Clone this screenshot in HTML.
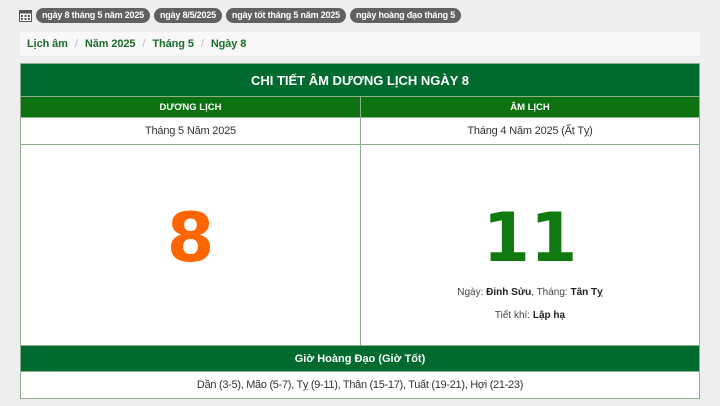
<!DOCTYPE html>
<html><head><meta charset="utf-8"><style>
*{box-sizing:border-box;margin:0;padding:0}
body{width:720px;height:406px;background:#eeeeee;font-family:"Liberation Sans",sans-serif;position:relative;overflow:hidden}
.tags{position:absolute;top:8px;left:19px;display:flex;gap:4px;align-items:center}
.tag{background:#616161;color:#fff;font-size:9px;letter-spacing:-0.2px;font-weight:bold;border-radius:8px;height:15px;line-height:15px;padding:0 6px}
.bc{position:absolute;top:32px;left:20px;width:680px;height:24px;background:#f8f8f8;font-size:11px;letter-spacing:-0.1px;font-weight:bold;color:#1c6e2a;line-height:24px;padding-left:7px}
.bc span{color:#bbb;font-weight:normal;margin:0 7px}
table{position:absolute;top:63px;left:20px;width:680px;border-collapse:collapse;background:#fff;border:1px solid #8fb08f}
td{border:1px solid #8fb08f;text-align:center;padding:0}
.t{background:#006a2f;color:#fff;font-weight:bold;font-size:13px;height:33px}
.s{background:#0c710f;color:#fff;font-weight:bold;font-size:9.5px;height:21px}
.r{font-size:11px;letter-spacing:-0.2px;color:#333;height:27px}
.big{height:201px;vertical-align:top}
.g{background:#006a2f;color:#fff;font-weight:bold;font-size:11px;height:26px}
.l{font-size:11px;letter-spacing:-0.3px;color:#333;height:27px}
.num{font-family:"DejaVu Sans",sans-serif;font-size:68px;font-weight:bold;margin-top:54px;line-height:80px;letter-spacing:0}
</style></head><body>
<div class="tags">
<svg width="13" height="13" viewBox="0 0 13 13"><rect x="0.5" y="1.5" width="12" height="11" fill="#fff" stroke="#555"/><rect x="0.5" y="1.5" width="12" height="3" fill="#555"/><g fill="#555"><rect x="2" y="6" width="2" height="2"/><rect x="5.5" y="6" width="2" height="2"/><rect x="9" y="6" width="2" height="2"/><rect x="2" y="9" width="2" height="2"/><rect x="5.5" y="9" width="2" height="2"/><rect x="9" y="9" width="2" height="2"/></g></svg>
<div class="tag">ngày 8 tháng 5 năm 2025</div><div class="tag">ngày 8/5/2025</div><div class="tag">ngày tốt tháng 5 năm 2025</div><div class="tag">ngày hoàng đạo tháng 5</div></div>
<div class="bc">Lịch âm<span>/</span>Năm 2025<span>/</span>Tháng 5<span>/</span>Ngày 8</div>
<table>
<tr><td colspan="2" class="t">CHI TIẾT ÂM DƯƠNG LỊCH NGÀY 8</td></tr>
<tr><td class="s" style="width:340px">DƯƠNG LỊCH</td><td class="s">ÂM LỊCH</td></tr>
<tr><td class="r">Tháng 5 Năm 2025</td><td class="r">Tháng 4 Năm 2025 (Ất Tỵ)</td></tr>
<tr><td class="big"><div class="num" style="color:#ff6600">8</div></td>
<td class="big"><div class="num" style="color:#107a10">11</div>
<div style="font-size:10px;color:#444;margin-top:8px">Ngày: <b style="color:#222">Đinh Sửu</b>, Tháng: <b style="color:#222">Tân Tỵ</b></div>
<div style="font-size:10px;color:#444;margin-top:12px">Tiết khí: <b style="color:#222">Lập hạ</b></div></td></tr>
<tr><td colspan="2" class="g">Giờ Hoàng Đạo (Giờ Tốt)</td></tr>
<tr><td colspan="2" class="l">Dần (3-5), Mão (5-7), Tỵ (9-11), Thân (15-17), Tuất (19-21), Hợi (21-23)</td></tr>
</table>
</body></html>
